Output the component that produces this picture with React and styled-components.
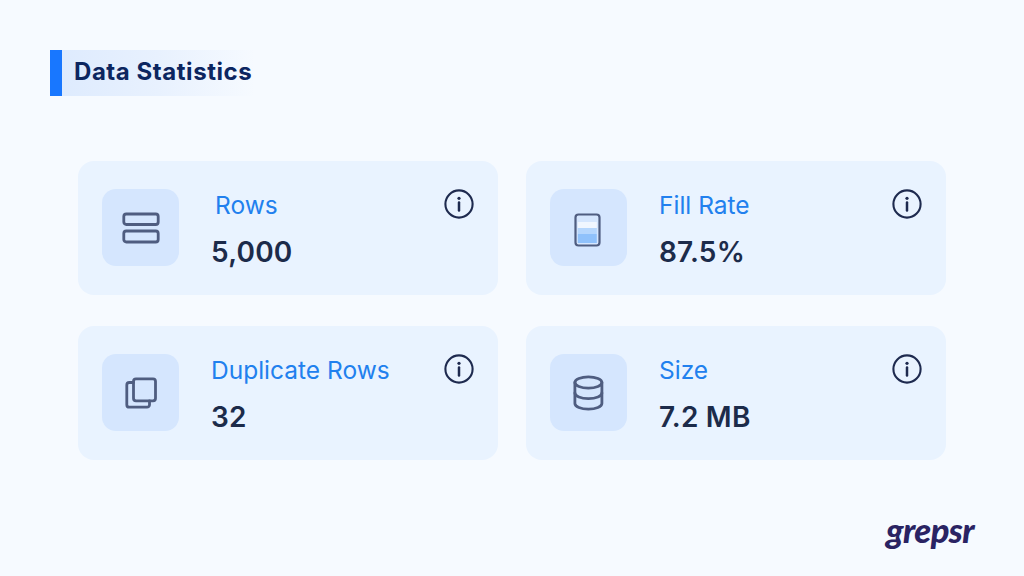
import React from "react";
import styled, { createGlobalStyle } from "styled-components";

const Global = createGlobalStyle`
  html, body { margin: 0; padding: 0; background: #f6faff; }
  * { box-sizing: border-box; }
`;

const Page = styled.div`
  width: 1024px;
  height: 576px;
  overflow: hidden;
  background: #f6faff;
  padding: 50px 50px 0;
  font-family: Inter, "Liberation Sans", sans-serif;
  display: flex;
  flex-direction: column;
`;

const Header = styled.div`
  width: 205px;
  height: 46px;
  display: flex;
  align-items: center;
  border-left: 12px solid #1877ff;
  padding-left: 12px;
  background: linear-gradient(90deg, #deebfe 0%, #e8f1fe 50%, #f6faff 100%);
  white-space: nowrap;
`;

const Title = styled.h1`
  margin: -3px 0 0;
  font-size: 24px;
  font-weight: 700;
  color: #0c2660;
  letter-spacing: 0.55px;
`;

const Grid = styled.div`
  margin: 65px 0 0 28px;
  display: grid;
  grid-template-columns: 420px 420px;
  grid-auto-rows: 133.5px;
  gap: 31.5px 28px;
`;

const Card = styled.div`
  display: flex;
  align-items: flex-start;
  padding: 28px 24px 0 24px;
  background: #e9f3ff;
  border-radius: 16px;
`;

const IconBox = styled.div`
  width: 77px;
  height: 77px;
  flex: none;
  border-radius: 14px;
  background: #d5e6fe;
  display: flex;
  align-items: center;
  justify-content: center;
`;

const Body = styled.div`
  flex: 1;
  margin-left: 32px;
`;

const Label = styled.div`
  font-size: 24.5px;
  line-height: 32px;
  font-weight: 400;
  color: #2180ee;
  margin-left: ${(p) => p.$indent || 0}px;
  white-space: nowrap;
`;

const Value = styled.div`
  margin-top: 15px;
  font-size: 28px;
  line-height: 32px;
  font-weight: 600;
  letter-spacing: 0.2px;
  color: #1c2b4a;
  white-space: nowrap;
`;

const Info = styled.svg`
  flex: none;
  width: 30px;
  height: 30px;
  margin-top: -0.5px;
`;

const Footer = styled.div`
  display: flex;
  justify-content: flex-end;
  margin-top: 52px;
  padding-right: 0;
`;

const Logo = styled.div`
  font-family: Lato, "Open Sans", sans-serif;
  font-style: italic;
  font-weight: 900;
  font-size: 34.5px;
  line-height: 36px;
  letter-spacing: -0.6px;
  color: #2a2363;
`;

const Glyph = ({ children }) => (
  <svg width="40" height="40" viewBox="0 0 40 40" fill="none" stroke="#4f5d80" strokeWidth="2.8" strokeLinejoin="round" strokeLinecap="round">
    {children}
  </svg>
);

const icons = {
  rows: (
    <Glyph>
      <rect x="2.8" y="6" width="34.4" height="10.5" rx="2.5" />
      <rect x="2.8" y="23" width="34.4" height="11" rx="2.5" />
    </Glyph>
  ),
  fill: (
    <Glyph>
      <rect x="8.8" y="14" width="19" height="6" fill="#f0f6ff" stroke="none" />
      <rect x="8.8" y="20" width="19" height="6" fill="#b5d6fd" stroke="none" />
      <rect x="8.8" y="26" width="19" height="9" fill="#8fc1fb" stroke="none" />
      <rect x="6.5" y="6.5" width="24" height="31" rx="3" strokeWidth="2.2" />
    </Glyph>
  ),
  copy: (
    <Glyph>
      <rect x="12.5" y="5.8" width="22" height="22" rx="2.5" />
      <path d="M12.5 9.5H8.3A2.5 2.5 0 0 0 5.8 12V31.7A2.5 2.5 0 0 0 8.3 34.2H26A2.5 2.5 0 0 0 28.5 31.7V27.8" />
    </Glyph>
  ),
  db: (
    <Glyph>
      <ellipse cx="19.4" cy="9.5" rx="13.5" ry="5.6" />
      <path d="M5.9 9.5V30.6C5.9 33.7 11.9 36.2 19.4 36.2S32.9 33.7 32.9 30.6V9.5" />
      <path d="M5.9 20C5.9 23.1 11.9 25.6 19.4 25.6S32.9 23.1 32.9 20" />
    </Glyph>
  ),
};

const stats = [
  { icon: "rows", label: "Rows", value: "5,000", indent: 4 },
  { icon: "fill", label: "Fill Rate", value: "87.5%" },
  { icon: "copy", label: "Duplicate Rows", value: "32" },
  { icon: "db", label: "Size", value: "7.2 MB" },
];

export default function App() {
  return (
    <Page>
      <Global />
      <Header>
        <Title>Data Statistics</Title>
      </Header>
      <Grid>
        {stats.map((s) => (
          <Card key={s.label}>
            <IconBox>{icons[s.icon]}</IconBox>
            <Body>
              <Label $indent={s.indent}>{s.label}</Label>
              <Value>{s.value}</Value>
            </Body>
            <Info viewBox="0 0 30 30" fill="none">
              <circle cx="15" cy="15" r="13.6" stroke="#1e2a4f" strokeWidth="2.1" />
              <circle cx="15" cy="9.3" r="1.6" fill="#1e2a4f" />
              <path d="M15 13.5V21.5" stroke="#1e2a4f" strokeWidth="2.5" strokeLinecap="round" />
            </Info>
          </Card>
        ))}
      </Grid>
      <Footer>
        <Logo>grepsr</Logo>
      </Footer>
    </Page>
  );
}
